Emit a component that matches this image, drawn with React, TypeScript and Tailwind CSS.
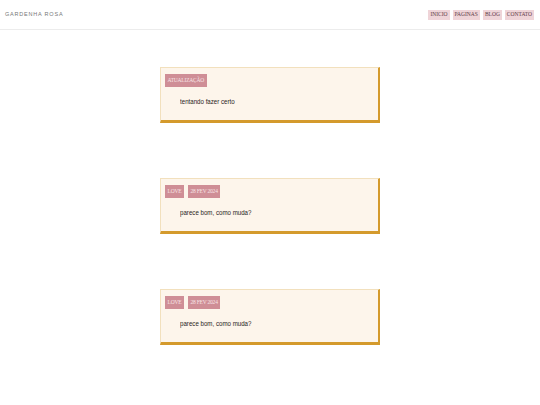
const NAV = ['Inicio', 'Paginas', 'Blog', 'Contato'];

const POSTS = [
  { tags: ['Atualização'], body: 'tentando fazer certo' },
  { tags: ['Love', '28 fev 2024'], body: 'parece bom, como muda?' },
  { tags: ['Love', '28 fev 2024'], body: 'parece bom, como muda?' },
];

function PostCard({ tags, body }: { tags: string[]; body: string }) {
  return (
    <div className="h-[56px] w-[220px] border-t border-l border-r-2 border-b-[3px] border-t-[#f2e0bd] border-l-[#f2e0bd] border-r-[#d49a2c] border-b-[#d49a2c] bg-[#fdf5eb] pl-1 pt-[6px]">
      <div className="flex gap-[4px]">
        {tags.map(t => (
          <span key={t} className="flex h-[13px] items-center bg-[#cf8e96] px-[2.5px] font-['Liberation_Serif',serif] text-[5.5px] uppercase tracking-[-0.2px] text-[#f7e4e6]">
            {t}
          </span>
        ))}
      </div>
      {/* the body face is condensed in the reference, so squeeze Liberation Sans */}
      <p className="ml-[15px] mt-[10px] w-fit origin-left scale-x-[0.82] font-['Liberation_Sans',Arial,sans-serif] text-[7.5px] leading-[9px] text-[#2a2422]">
        {body}
      </p>
    </div>
  );
}

export default function App() {
  return (
    <div className="min-h-[405px] w-full bg-white">
      <header className="flex h-[30px] items-center justify-between border-b border-[#ececec] pl-[5px] pr-[6px]">
        <span className="font-['Liberation_Sans',Arial,sans-serif] text-[5.5px] uppercase tracking-[0.8px] text-[#777]">
          Gardenha Rosa
        </span>
        <nav className="flex gap-[3px]">
          {NAV.map(n => (
            <span key={n} className="flex h-[10px] items-center bg-[#efd4d8] px-[2px] font-['Liberation_Serif',serif] text-[5.5px] uppercase text-[#5e3d47]">
              {n}
            </span>
          ))}
        </nav>
      </header>

      <main className="flex flex-col items-center gap-[55px] pt-[37px]">
        {POSTS.map((p, i) => (
          <PostCard key={i} tags={p.tags} body={p.body} />
        ))}
      </main>
    </div>
  );
}
